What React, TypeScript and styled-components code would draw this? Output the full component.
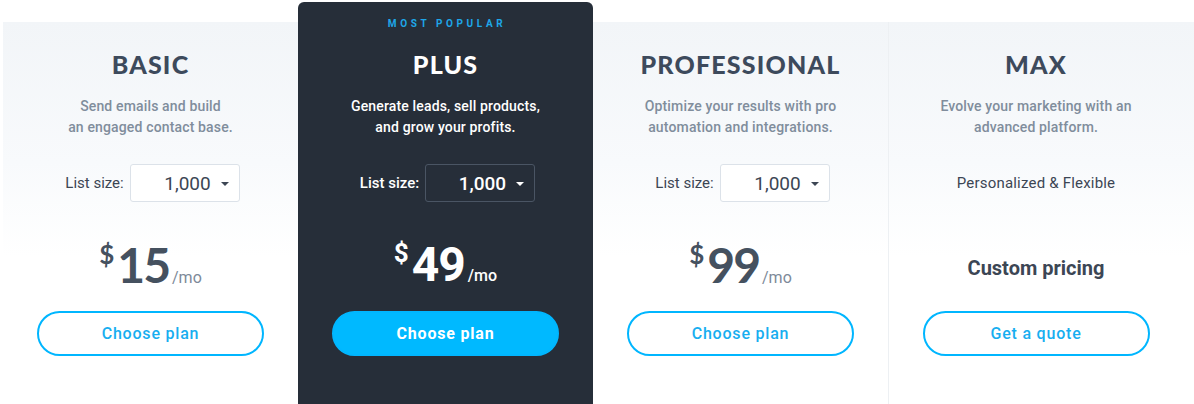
import React from "react";
import styled, { createGlobalStyle, css } from "styled-components";

const Global = createGlobalStyle`
  html, body { margin: 0; padding: 0; background: #fff; }
  body { font-family: Roboto, "Noto Sans", Arial, sans-serif; -webkit-font-smoothing: antialiased; }
  * { box-sizing: border-box; }
`;

const Page = styled.div`
  width: 1194px;
  height: 404px;
  overflow: hidden;
  padding-top: 22px;
`;

const Grid = styled.div`
  display: grid;
  grid-template-columns: repeat(4, 295px);
  margin-left: 3px;
  background: linear-gradient(to bottom, #f2f5f8 0px, #f8fafc 140px, #ffffff 235px);
  margin-right: -14px;
`;

const Column = styled.div<{ $featured?: boolean; $divider?: boolean }>`
  display: flex;
  flex-direction: column;
  align-items: center;
  padding-bottom: 80px;
  ${(p) =>
    p.$featured &&
    css`
      background: #262e39;
      border-radius: 6px 6px 0 0;
      margin-top: -20px;
    `}
  ${(p) =>
    p.$divider &&
    css`
      border-left: 1px solid #edf0f3;
    `}
`;

const Badge = styled.div<{ $featured?: boolean }>`
  height: ${(p) => (p.$featured ? 44 : 24)}px;
  line-height: 44px;
  font-size: 10px;
  font-weight: 700;
  letter-spacing: 3.6px;
  color: #1ea6e8;
  padding-left: 3px;
`;

const Title = styled.h2<{ $featured?: boolean }>`
  margin: 0;
  height: 36px;
  line-height: 36px;
  font-family: Lato, "Open Sans", sans-serif;
  font-weight: 900;
  font-size: 25px;
  letter-spacing: 1.2px;
  color: ${(p) => (p.$featured ? "#ffffff" : "#3d4a5c")};
`;

const Desc = styled.p<{ $featured?: boolean }>`
  margin: 14px 0 0;
  height: 42px;
  font-size: 14px;
  line-height: 21px;
  letter-spacing: 0.15px;
  text-align: center;
  font-weight: 500;
  color: ${(p) => (p.$featured ? "#ffffff" : "#808d9c")};
`;

const OptionRow = styled.div<{ $featured?: boolean }>`
  margin-top: 26px;
  height: 38px;
  display: flex;
  align-items: center;
  gap: 6px;
  font-size: 15px;
  font-weight: ${(p) => (p.$featured ? 500 : 400)};
  color: ${(p) => (p.$featured ? "#ffffff" : "#3c4654")};
  padding-left: 4px;
`;

const Select = styled.div<{ $featured?: boolean }>`
  width: 110px;
  height: 38px;
  border-radius: 3px;
  display: flex;
  align-items: center;
  justify-content: flex-end;
  gap: 10px;
  padding-right: 10px;
  font-size: 19px;
  border: 1px solid ${(p) => (p.$featured ? "#4a5564" : "#dce2e9")};
  background: ${(p) => (p.$featured ? "transparent" : "#ffffff")};
  color: ${(p) => (p.$featured ? "#ffffff" : "#3c4654")};
`;

const Caret = styled.span`
  width: 0;
  height: 0;
  border-left: 4px solid transparent;
  border-right: 4px solid transparent;
  border-top: 4px solid currentColor;
  margin-top: 1px;
`;

const PriceRow = styled.div`
  height: 109px;
  width: 100%;
  text-align: center;
`;

const Price = styled.div<{ $featured?: boolean }>`
  padding-top: 34px;
  font-family: ${(p) => (p.$featured ? "Roboto" : "Lato")}, sans-serif;
  font-weight: 700;
  font-size: 48px;
  letter-spacing: ${(p) => (p.$featured ? -1 : -2)}px;
  line-height: normal;
  color: ${(p) => (p.$featured ? "#ffffff" : "#45515f")};
  white-space: nowrap;
`;

const Currency = styled.span`
  font-size: 26px;
  letter-spacing: 0;
  vertical-align: 19px;
  margin-right: 3px;
`;

const Per = styled.span<{ $featured?: boolean }>`
  font-family: Roboto, sans-serif;
  font-size: 16px;
  letter-spacing: 0;
  font-weight: ${(p) => (p.$featured ? 500 : 400)};
  color: ${(p) => (p.$featured ? "#ffffff" : "#7d8a99")};
  margin-left: 3px;
`;

const Custom = styled.div`
  padding-top: 54px;
  line-height: 24px;
  font-size: 20px;
  font-weight: 700;
  color: #3c4654;
`;

const Personal = styled.div`
  margin-top: 26px;
  height: 38px;
  line-height: 38px;
  font-size: 15px;
  letter-spacing: 0.2px;
  color: #3c4654;
`;

const Button = styled.button<{ $filled?: boolean }>`
  width: 227px;
  height: 45px;
  border-radius: 23px;
  border: 2px solid #00b6ff;
  font-family: Roboto, sans-serif;
  font-size: 16px;
  letter-spacing: 0.8px;
  cursor: pointer;
  background: ${(p) => (p.$filled ? "#00b9ff" : "#ffffff")};
  color: ${(p) => (p.$filled ? "#ffffff" : "#17aef0")};
  font-weight: ${(p) => (p.$filled ? 700 : 500)};
`;

type Plan = {
  name: string;
  desc: [string, string];
  price?: string;
  featured?: boolean;
};

const plans: Plan[] = [
  { name: "BASIC", desc: ["Send emails and build", "an engaged contact base."], price: "15" },
  { name: "PLUS", desc: ["Generate leads, sell products,", "and grow your profits."], price: "49", featured: true },
  { name: "PROFESSIONAL", desc: ["Optimize your results with pro", "automation and integrations."], price: "99" },
];

export default function App() {
  return (
    <Page>
      <Global />
      <Grid>
        {plans.map((p) => (
          <Column key={p.name} $featured={p.featured}>
            <Badge $featured={p.featured}>{p.featured ? "MOST POPULAR" : ""}</Badge>
            <Title $featured={p.featured}>{p.name}</Title>
            <Desc $featured={p.featured}>
              {p.desc[0]}
              <br />
              {p.desc[1]}
            </Desc>
            <OptionRow $featured={p.featured}>
              List size:
              <Select $featured={p.featured}>
                1,000
                <Caret />
              </Select>
            </OptionRow>
            <PriceRow>
              <Price $featured={p.featured}>
                <Currency>$</Currency>
                {p.price}
                <Per $featured={p.featured}>/mo</Per>
              </Price>
            </PriceRow>
            <Button $filled={p.featured}>Choose plan</Button>
          </Column>
        ))}
        <Column $divider>
          <Badge />
          <Title>MAX</Title>
          <Desc>
            Evolve your marketing with an
            <br />
            advanced platform.
          </Desc>
          <Personal>Personalized &amp; Flexible</Personal>
          <PriceRow>
            <Custom>Custom pricing</Custom>
          </PriceRow>
          <Button>Get a quote</Button>
        </Column>
      </Grid>
    </Page>
  );
}
